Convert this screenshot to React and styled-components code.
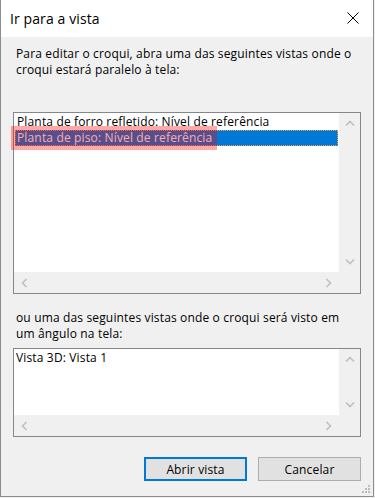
import React from "react";
import styled, { createGlobalStyle } from "styled-components";

const GlobalStyle = createGlobalStyle`
  html, body {
    margin: 0;
    padding: 0;
    background: #f0f0f0;
  }
  body {
    font-family: "Open Sans", "Noto Sans", sans-serif;
    font-size: 12px;
    letter-spacing: 0.15px;
    color: #000;
  }
`;

const Window = styled.div`
  position: relative;
  width: 374px;
  height: 497px;
  box-sizing: border-box;
  border: 1px solid #8c8c8c;
  border-top: none;
  background: #f0f0f0;
  display: flex;
  flex-direction: column;
`;

const TitleBar = styled.div`
  height: 37px;
  background: #fff;
  display: flex;
  align-items: center;
  justify-content: space-between;
  padding: 0 14px 0 9px;
  flex-shrink: 0;
`;

const Title = styled.span`
  font-size: 14px;
  letter-spacing: 0.1px;
  padding-bottom: 1px;
`;

const CloseButton = styled.div`
  width: 12px;
  height: 12px;
  display: flex;
  margin-top: -1px;
`;

const Content = styled.div`
  display: flex;
  flex-direction: column;
  padding: 0 12px;
`;

const Description = styled.p`
  margin: ${(p) => p.$top}px 0 0 3px;
  line-height: 16px;
`;

const ListBox = styled.div`
  margin-top: ${(p) => p.$top}px;
  height: ${(p) => p.$height}px;
  box-sizing: border-box;
  border: 1px solid #828790;
  background: #fff;
  display: grid;
  grid-template-columns: 1fr 21px;
  grid-template-rows: 1fr 21px;
`;

const Items = styled.div`
  padding: 1px;
  overflow: hidden;
`;

const Item = styled.div`
  height: 16px;
  line-height: 16px;
  padding-left: ${(p) => p.$indent}px;
  white-space: nowrap;
  color: ${(p) => (p.$selected ? "#fff" : "#000")};
  background: ${(p) => (p.$selected ? "#0078d7" : "transparent")};
  outline: ${(p) => (p.$selected ? "1px dotted #ff9a3a" : "none")};
  outline-offset: -1px;
`;

const VScroll = styled.div`
  background: #f0f0f0;
  display: flex;
  flex-direction: column;
  justify-content: space-between;
`;

const HScroll = styled.div`
  background: #f0f0f0;
  display: flex;
  justify-content: space-between;
`;

const Corner = styled.div`
  background: #f0f0f0;
`;

const ArrowButton = styled.div`
  width: 21px;
  height: 21px;
  display: flex;
  align-items: center;
  justify-content: center;
`;

const ButtonRow = styled.div`
  margin-top: 20px;
  display: flex;
  justify-content: flex-end;
  gap: 11px;
`;

const Button = styled.button`
  width: 103px;
  height: 24px;
  box-sizing: border-box;
  background: #e1e1e1;
  border: ${(p) => (p.$primary ? "2px solid #0078d7" : "1px solid #adadad")};
  font-family: inherit;
  font-size: 12px;
  letter-spacing: inherit;
  color: #000;
  padding: 0;
`;

const Highlight = styled.div`
  position: absolute;
  left: 10px;
  top: 126px;
  width: 206px;
  height: 24px;
  background: rgba(255, 0, 0, 0.34);
  pointer-events: none;
`;

const Grip = styled.svg`
  position: absolute;
  right: 2px;
  bottom: 2px;
`;

const chevrons = {
  up: "1,5.5 5,1.5 9,5.5",
  down: "1,1.5 5,5.5 9,1.5",
  left: "5.5,1 1.5,5 5.5,9",
  right: "1.5,1 5.5,5 1.5,9",
};

function Chevron({ dir }) {
  const vertical = dir === "up" || dir === "down";
  return (
    <svg width={vertical ? 10 : 7} height={vertical ? 7 : 10}>
      <polyline
        points={chevrons[dir]}
        fill="none"
        stroke="#c1c1c1"
        strokeWidth="1.7"
      />
    </svg>
  );
}

function List({ top, height, children }) {
  return (
    <ListBox $top={top} $height={height}>
      <Items>{children}</Items>
      <VScroll>
        <ArrowButton>
          <Chevron dir="up" />
        </ArrowButton>
        <ArrowButton>
          <Chevron dir="down" />
        </ArrowButton>
      </VScroll>
      <HScroll>
        <ArrowButton>
          <Chevron dir="left" />
        </ArrowButton>
        <ArrowButton>
          <Chevron dir="right" />
        </ArrowButton>
      </HScroll>
      <Corner />
    </ListBox>
  );
}

export default function App() {
  return (
    <>
      <GlobalStyle />
      <Window>
        <TitleBar>
          <Title>Ir para a vista</Title>
          <CloseButton>
            <svg width="12" height="12">
              <path d="M0.5 0.5 L11.5 11.5 M11.5 0.5 L0.5 11.5" stroke="#000" strokeWidth="1" />
            </svg>
          </CloseButton>
        </TitleBar>
        <Content>
          <Description $top={9}>
            Para editar o croqui, abra uma das seguintes vistas onde o croqui estará paralelo à tela:
          </Description>
          <List top={34} height={182}>
            <Item $indent={2}>Planta de forro refletido: Nível de referência</Item>
            <Item $indent={2} $selected>
              Planta de piso: Nível de referência
            </Item>
          </List>
          <Description $top={16}>
            ou uma das seguintes vistas onde o croqui será visto em um ângulo na tela:
          </Description>
          <List top={6} height={89}>
            <Item $indent={1}>Vista 3D: Vista 1</Item>
          </List>
          <ButtonRow>
            <Button $primary>Abrir vista</Button>
            <Button>Cancelar</Button>
          </ButtonRow>
        </Content>
        <Highlight />
        <Grip width="10" height="10">
          <g fill="#bcbcbc">
            <rect x="7" y="1" width="2" height="2" />
            <rect x="4" y="4" width="2" height="2" />
            <rect x="7" y="4" width="2" height="2" />
            <rect x="1" y="7" width="2" height="2" />
            <rect x="4" y="7" width="2" height="2" />
            <rect x="7" y="7" width="2" height="2" />
          </g>
        </Grip>
      </Window>
    </>
  );
}
